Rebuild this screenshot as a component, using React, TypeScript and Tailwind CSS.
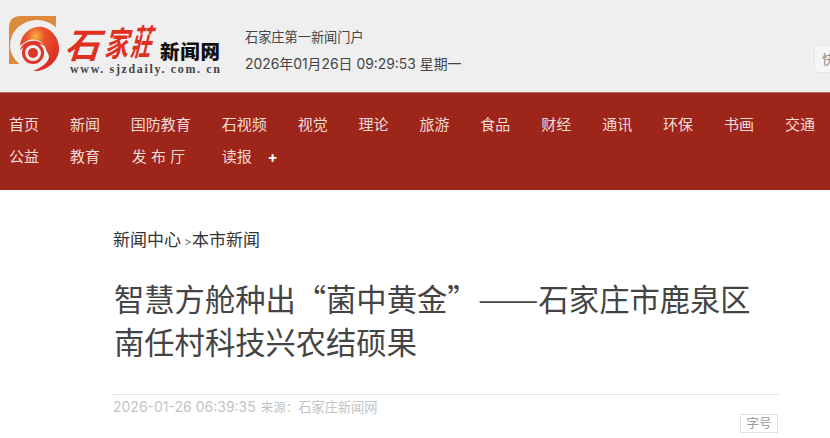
const row1 = ["首页","新闻","国防教育","石视频","视觉","理论","旅游","食品","财经","通讯","环保","书画","交通"];

function Logo() {
  const brush = "'Noto Sans CJK TC', 'Noto Sans CJK SC', sans-serif";
  return (
    <svg width="226" height="76" viewBox="0 0 226 76" className="shrink-0 block">
      <defs>
        <radialGradient id="glow" cx="40%" cy="22%" r="70%">
          <stop offset="0%" stopColor="#f6b23c" />
          <stop offset="35%" stopColor="#e9512b" />
          <stop offset="100%" stopColor="#d92f25" />
        </radialGradient>
      </defs>
      <path d="M9 64V28Q9 16 21 16H56V64Z" fill="#dc8a3c" />
      <ellipse cx="37" cy="45" rx="27" ry="25" fill="#efefef" />
      <path d="M56 64H20Q30 72 40 70Q52 68 56 56Z" fill="#efefef" />
      <path d="M20 46C21 32 33 25 43 27C54 30 60 41 59 51C57 63 45 72 33 71C43 67 49 62 49 56C45 44 30 36 20 46Z" fill="url(#glow)" />
      <circle cx="33" cy="53" r="13.5" fill="#efefef" />
      <path d="M20 50C23 40 37 37 45 46C38 42 28 43 20 50Z" fill="#e0392a" />
      <circle cx="33" cy="53" r="9.5" fill="none" stroke="#dd3528" strokeWidth="3" />
      <circle cx="33" cy="53" r="5" fill="#dd3528" />
      <g fill="#e0301f" fontFamily={brush} fontWeight="700">
        <text fontSize="35" transform="translate(64 58) skewX(-18)">石</text>
        <text fontSize="26" transform="translate(104 56) skewX(-14) scale(0.92 1.3)">家</text>
        <text fontSize="25" transform="translate(130 55) skewX(-14) scale(0.82 1.4)">莊</text>
      </g>
      <text x="160" y="59" fill="#111" fontFamily="'Noto Sans CJK SC', sans-serif" fontWeight="900" fontSize="19.5" textLength="60">新闻网</text>
      <text x="70" y="73" fill="#444" fontFamily="'Liberation Serif', serif" fontWeight="700" fontSize="12" textLength="150">www. sjzdaily. com. cn</text>
    </svg>
  );
}

export default function App() {
  return (
    <div className="w-[830px] h-[438px] overflow-hidden bg-white text-[#333] font-['Inter','Noto_Sans_CJK_SC',sans-serif]">
      <header className="h-[92px] bg-[#efefef] flex items-start overflow-hidden">
        <Logo />
        <div className="ml-[19px] pt-[25px] shrink-0 w-[500px] text-[#444]">
          <div className="h-[24px] leading-[24px] text-[13.2px]">石家庄第一新闻门户</div>
          <div className="h-[30px] leading-[30px] text-[13.9px]">2026年01月26日 09:29:53 星期一</div>
        </div>
        <div className="ml-[69px] mt-[45px] shrink-0 w-[60px] h-[28px] rounded-[5px] bg-[#f6f6f6] border border-[#e6e6e6] pl-[7px] text-[13px] leading-[26px] text-[#888]">快讯</div>
      </header>
      <nav className="h-[98px] bg-[#9e251a] pt-[15px] pl-[9px] border-t border-[#b86a62] text-[15px] leading-[33px] text-[#f3dcd8]">
        <div className="flex gap-x-[30.9px] whitespace-nowrap">
          {row1.map((t) => <span key={t}>{t}</span>)}
        </div>
        <div className="flex gap-x-[30.9px] whitespace-nowrap -mt-[1px]">
          <span>公益</span>
          <span>教育</span>
          <span className="w-[60px] pl-[1px] whitespace-pre">发 布 厅</span>
          <span>读报</span>
          <span className="-ml-[15px] font-bold text-white">+</span>
        </div>
      </nav>
      <main className="pl-[113px] pr-[51px]">
        <div className="pt-[37px] h-[71px] text-[17px] leading-[26px] text-[#333] flex items-baseline">
          <span>新闻中心</span><span className="text-[12px] text-[#777] ml-[3px]">&gt;</span><span>本市新闻</span>
        </div>
        <h1 className="pl-[1px] text-[30.3px] leading-[43px] font-normal text-[#444] h-[134px] pt-[16px] border-b border-[#e4e4e4] font-['Noto_Sans_CJK_SC',sans-serif]">
          智慧方舱种出“菌中黄金”<span className="inline-block w-[61px] origin-left scale-x-[1.19] whitespace-nowrap">——</span>石家庄市鹿泉区<br />南任村科技兴农结硕果
        </h1>
        <div className="h-[20px] text-[14px] leading-[20px] text-[#c4c4c4] pt-[2px] flex items-baseline whitespace-nowrap">
          <span>2026-01-26 06:39:35</span>
          <span className="ml-[5px] text-[12.5px]">来源：</span>
          <span className="text-[13.2px]">石家庄新闻网</span>
        </div>
        <div className="flex justify-end">
          <span className="mt-[-1px] mr-[1px] w-[38px] h-[19px] border border-[#e0e0e0] text-[12.5px] leading-[17px] text-center text-[#999]">字号</span>
        </div>
      </main>
    </div>
  );
}
